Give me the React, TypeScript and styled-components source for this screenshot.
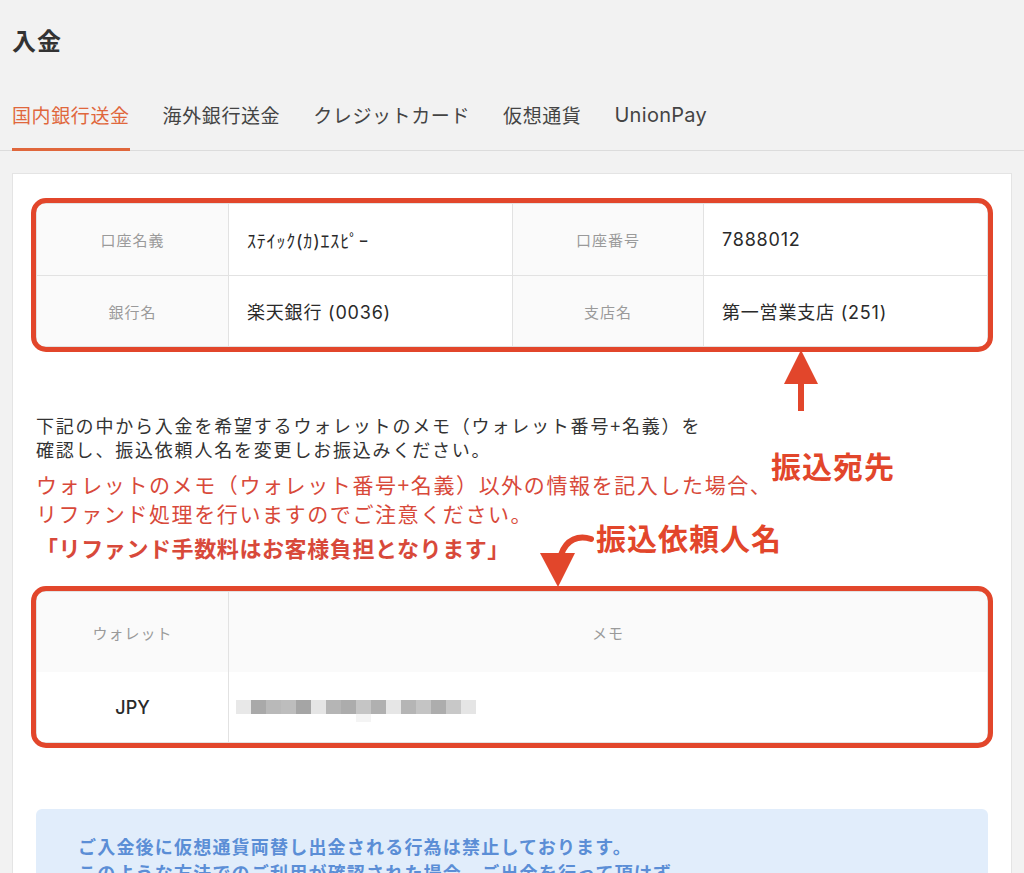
import styled, { createGlobalStyle } from 'styled-components';

const GlobalStyle = createGlobalStyle`
  html, body {
    margin: 0;
    padding: 0;
    background: #f2f2f2;
  }
  body {
    font-family: Inter, "Noto Sans CJK JP", sans-serif;
    color: #333;
  }
`;

const RED = '#e2462b';

const Page = styled.div`
  min-height: 873px;
  overflow: hidden;
`;

const Title = styled.h1`
  margin: 0;
  padding: 24px 12px 0;
  font-family: "Noto Sans CJK JP", sans-serif;
  font-size: 24px;
  line-height: 32px;
  font-weight: 700;
  letter-spacing: 1px;
  color: #333;
`;

const TabBar = styled.nav`
  display: flex;
  gap: 33px;
  padding: 45px 12px 0;
  border-bottom: 1px solid #dcdcdc;
`;

const Tab = styled.div<{ $active?: boolean }>`
  font-family: "Noto Sans CJK JP", sans-serif;
  font-size: 19px;
  line-height: 28px;
  letter-spacing: 0.6px;
  padding-bottom: 19px;
  color: ${(p) => (p.$active ? '#e0673c' : '#444')};
  border-bottom: 3px solid ${(p) => (p.$active ? '#e0673c' : 'transparent')};
  margin-bottom: -1px;
`;

const LatinTab = styled(Tab)`
  font-family: Inter, "Noto Sans CJK JP", sans-serif;
  font-size: 20px;
  letter-spacing: 0.3px;
`;

const Card = styled.section`
  position: relative;
  margin: 22px 12px 0;
  background: #fff;
  border: 1px solid #e4e4e4;
  border-bottom: none;
  padding: 29px 23px 0;
  width: 1000px;
  box-sizing: border-box;
`;

const Marked = styled.div`
  position: relative;
  &::after {
    content: '';
    position: absolute;
    inset: -5px -5px -5px -5px;
    border: 5px solid ${RED};
    border-radius: 15px;
    pointer-events: none;
  }
`;

const Table = styled.div<{ $cols: string }>`
  display: grid;
  grid-template-columns: ${(p) => p.$cols};
  border: 1px solid #e2e2e2;
`;

const Cell = styled.div<{ $h: number }>`
  height: ${(p) => p.$h}px;
  display: flex;
  align-items: center;
  border-right: 1px solid #e2e2e2;
  border-bottom: 1px solid #e2e2e2;
  box-sizing: border-box;
  &:nth-last-child(-n + 4) {
    border-bottom: none;
  }
`;

const LabelCell = styled(Cell)`
  justify-content: center;
  background: #fafafa;
  font-family: "Noto Sans CJK JP", sans-serif;
  font-size: 15px;
  letter-spacing: 1px;
  color: #9a9a9a;
`;

const ValueCell = styled(Cell)`
  padding-left: 18px;
  font-size: 18px;
  letter-spacing: 0.8px;
  color: #2a2a2a;
  &:last-child,
  &:nth-child(4n) {
    border-right: none;
  }
`;

const HeadCell = styled(LabelCell)<{ $last?: boolean }>`
  ${(p) => p.$last && 'border-right: none;'}
`;

const BodyCell = styled(Cell)<{ $center?: boolean; $last?: boolean }>`
  justify-content: ${(p) => (p.$center ? 'center' : 'flex-start')};
  padding-left: ${(p) => (p.$center ? 0 : 7)}px;
  font-size: 18px;
  font-weight: 500;
  color: #2a2a2a;
  border-bottom: none;
  ${(p) => p.$last && 'border-right: none;'}
`;

const Notes = styled.div`
  margin-top: 66px;
  font-family: "Noto Sans CJK JP", sans-serif;
`;

const Plain = styled.p`
  margin: 0;
  font-size: 18px;
  line-height: 24px;
  letter-spacing: 1.8px;
  color: #333;
`;

const Warn = styled.p<{ $bold?: boolean }>`
  margin: ${(p) => (p.$bold ? '5px 0 0' : '9px 0 0')};
  font-size: ${(p) => (p.$bold ? 22 : 21)}px;
  line-height: 29px;
  letter-spacing: ${(p) => (p.$bold ? '0.6px' : '1.6px')};
  font-weight: ${(p) => (p.$bold ? 700 : 400)};
  color: #d8493a;
`;

const SecondTable = styled(Marked)`
  margin-top: 29px;
`;

const Notice = styled.div`
  margin-top: 66px;
  background: #e1edfb;
  border-radius: 6px;
  padding: 24px 42px 30px;
  font-family: "Noto Sans CJK JP", sans-serif;
  font-size: 18px;
  line-height: 26px;
  letter-spacing: 1.2px;
  font-weight: 700;
  color: #5b8ed6;
`;

const Annotation = styled.div<{ $x: number; $y: number }>`
  position: absolute;
  left: ${(p) => p.$x}px;
  top: ${(p) => p.$y}px;
  font-family: "Noto Sans CJK JP", sans-serif;
  font-size: 30px;
  line-height: 40px;
  font-weight: 700;
  letter-spacing: 1px;
  color: ${RED};
  white-space: nowrap;
`;

const ArrowLayer = styled.svg`
  position: absolute;
  left: 0;
  top: 0;
  pointer-events: none;
  overflow: visible;
`;

const blur = [
  '#e8e8e8', '#a9a9a9', '#b9b9b9', '#bdbdbd', '#a5a5a5', '#e5e5e5', '#b5b5b5', '#acacac',
  '#c5c5c5', '#b0b0b0', '#e6e6e6', '#b5b5b5', '#c4c4c4', '#adadad', '#c8c8c8', '#e5e5e5',
];

const Blurred = () => (
  <svg width="240" height="30" viewBox="0 0 240 30">
    {blur.map((c, i) => (
      <rect key={i} x={i * 15} y={8} width={15} height={14} fill={c} />
    ))}
    <rect x={120} y={22} width={15} height={14} fill="#f4f4f4" />
  </svg>
);

const accountRows = [
  ['口座名義', 'ｽﾃｲｯｸ(ｶ)ｴｽﾋﾟｰ', '口座番号', '7888012'],
  ['銀行名', '楽天銀行 (0036)', '支店名', '第一営業支店 (251)'],
];

const tabs = ['国内銀行送金', '海外銀行送金', 'クレジットカード', '仮想通貨'];

const App = () => {
  return (
    <Page>
      <GlobalStyle />
      <Title>入金</Title>
      <TabBar>
        {tabs.map((t, i) => (
          <Tab key={t} $active={i === 0}>
            {t}
          </Tab>
        ))}
        <LatinTab>UnionPay</LatinTab>
      </TabBar>

      <Card>
        <Marked>
          <Table $cols="192px 284px 191px 1fr">
            {accountRows.map((row, r) =>
              row.map((v, i) =>
                i % 2 === 0 ? (
                  <LabelCell key={`${r}-${i}`} $h={r === 0 ? 72 : 70}>
                    {v}
                  </LabelCell>
                ) : (
                  <ValueCell key={`${r}-${i}`} $h={r === 0 ? 72 : 70}>
                    {v}
                  </ValueCell>
                ),
              ),
            )}
          </Table>
        </Marked>

        <Notes>
          <Plain>
            下記の中から入金を希望するウォレットのメモ（ウォレット番号+名義）を
            <br />
            確認し、振込依頼人名を変更しお振込みください。
          </Plain>
          <Warn>
            ウォレットのメモ（ウォレット番号+名義）以外の情報を記入した場合、
            <br />
            リファンド処理を行いますのでご注意ください。
          </Warn>
          <Warn $bold>「リファンド手数料はお客様負担となります」</Warn>
        </Notes>

        <SecondTable>
          <Table $cols="192px 1fr">
            <HeadCell $h={80}>ウォレット</HeadCell>
            <HeadCell $h={80} $last>
              メモ
            </HeadCell>
            <BodyCell $h={70} $center>
              JPY
            </BodyCell>
            <BodyCell $h={70} $last>
              <Blurred />
            </BodyCell>
          </Table>
        </SecondTable>

        <Notice>
          ご入金後に仮想通貨両替し出金される行為は禁止しております。
          <br />
          このような方法でのご利用が確認された場合、ご出金を行って頂けず、
        </Notice>

        <ArrowLayer width="1000" height="700">
          {/* up arrow to the account table */}
          <polygon points="788,176 771,210 805,210" fill={RED} />
          <rect x="785" y="207" width="6" height="30" fill={RED} />
          {/* curved arrow down to the memo table */}
          <path
            d="M578 365 C 566 361, 553 365, 548 381"
            fill="none"
            stroke={RED}
            strokeWidth="6"
            strokeLinecap="round"
          />
          <polygon points="527,379 562,379 545,413" fill={RED} />
        </ArrowLayer>
        <Annotation $x={758} $y={271}>
          振込宛先
        </Annotation>
        <Annotation $x={583} $y={343}>
          振込依頼人名
        </Annotation>
      </Card>
    </Page>
  );
};

export default App;
